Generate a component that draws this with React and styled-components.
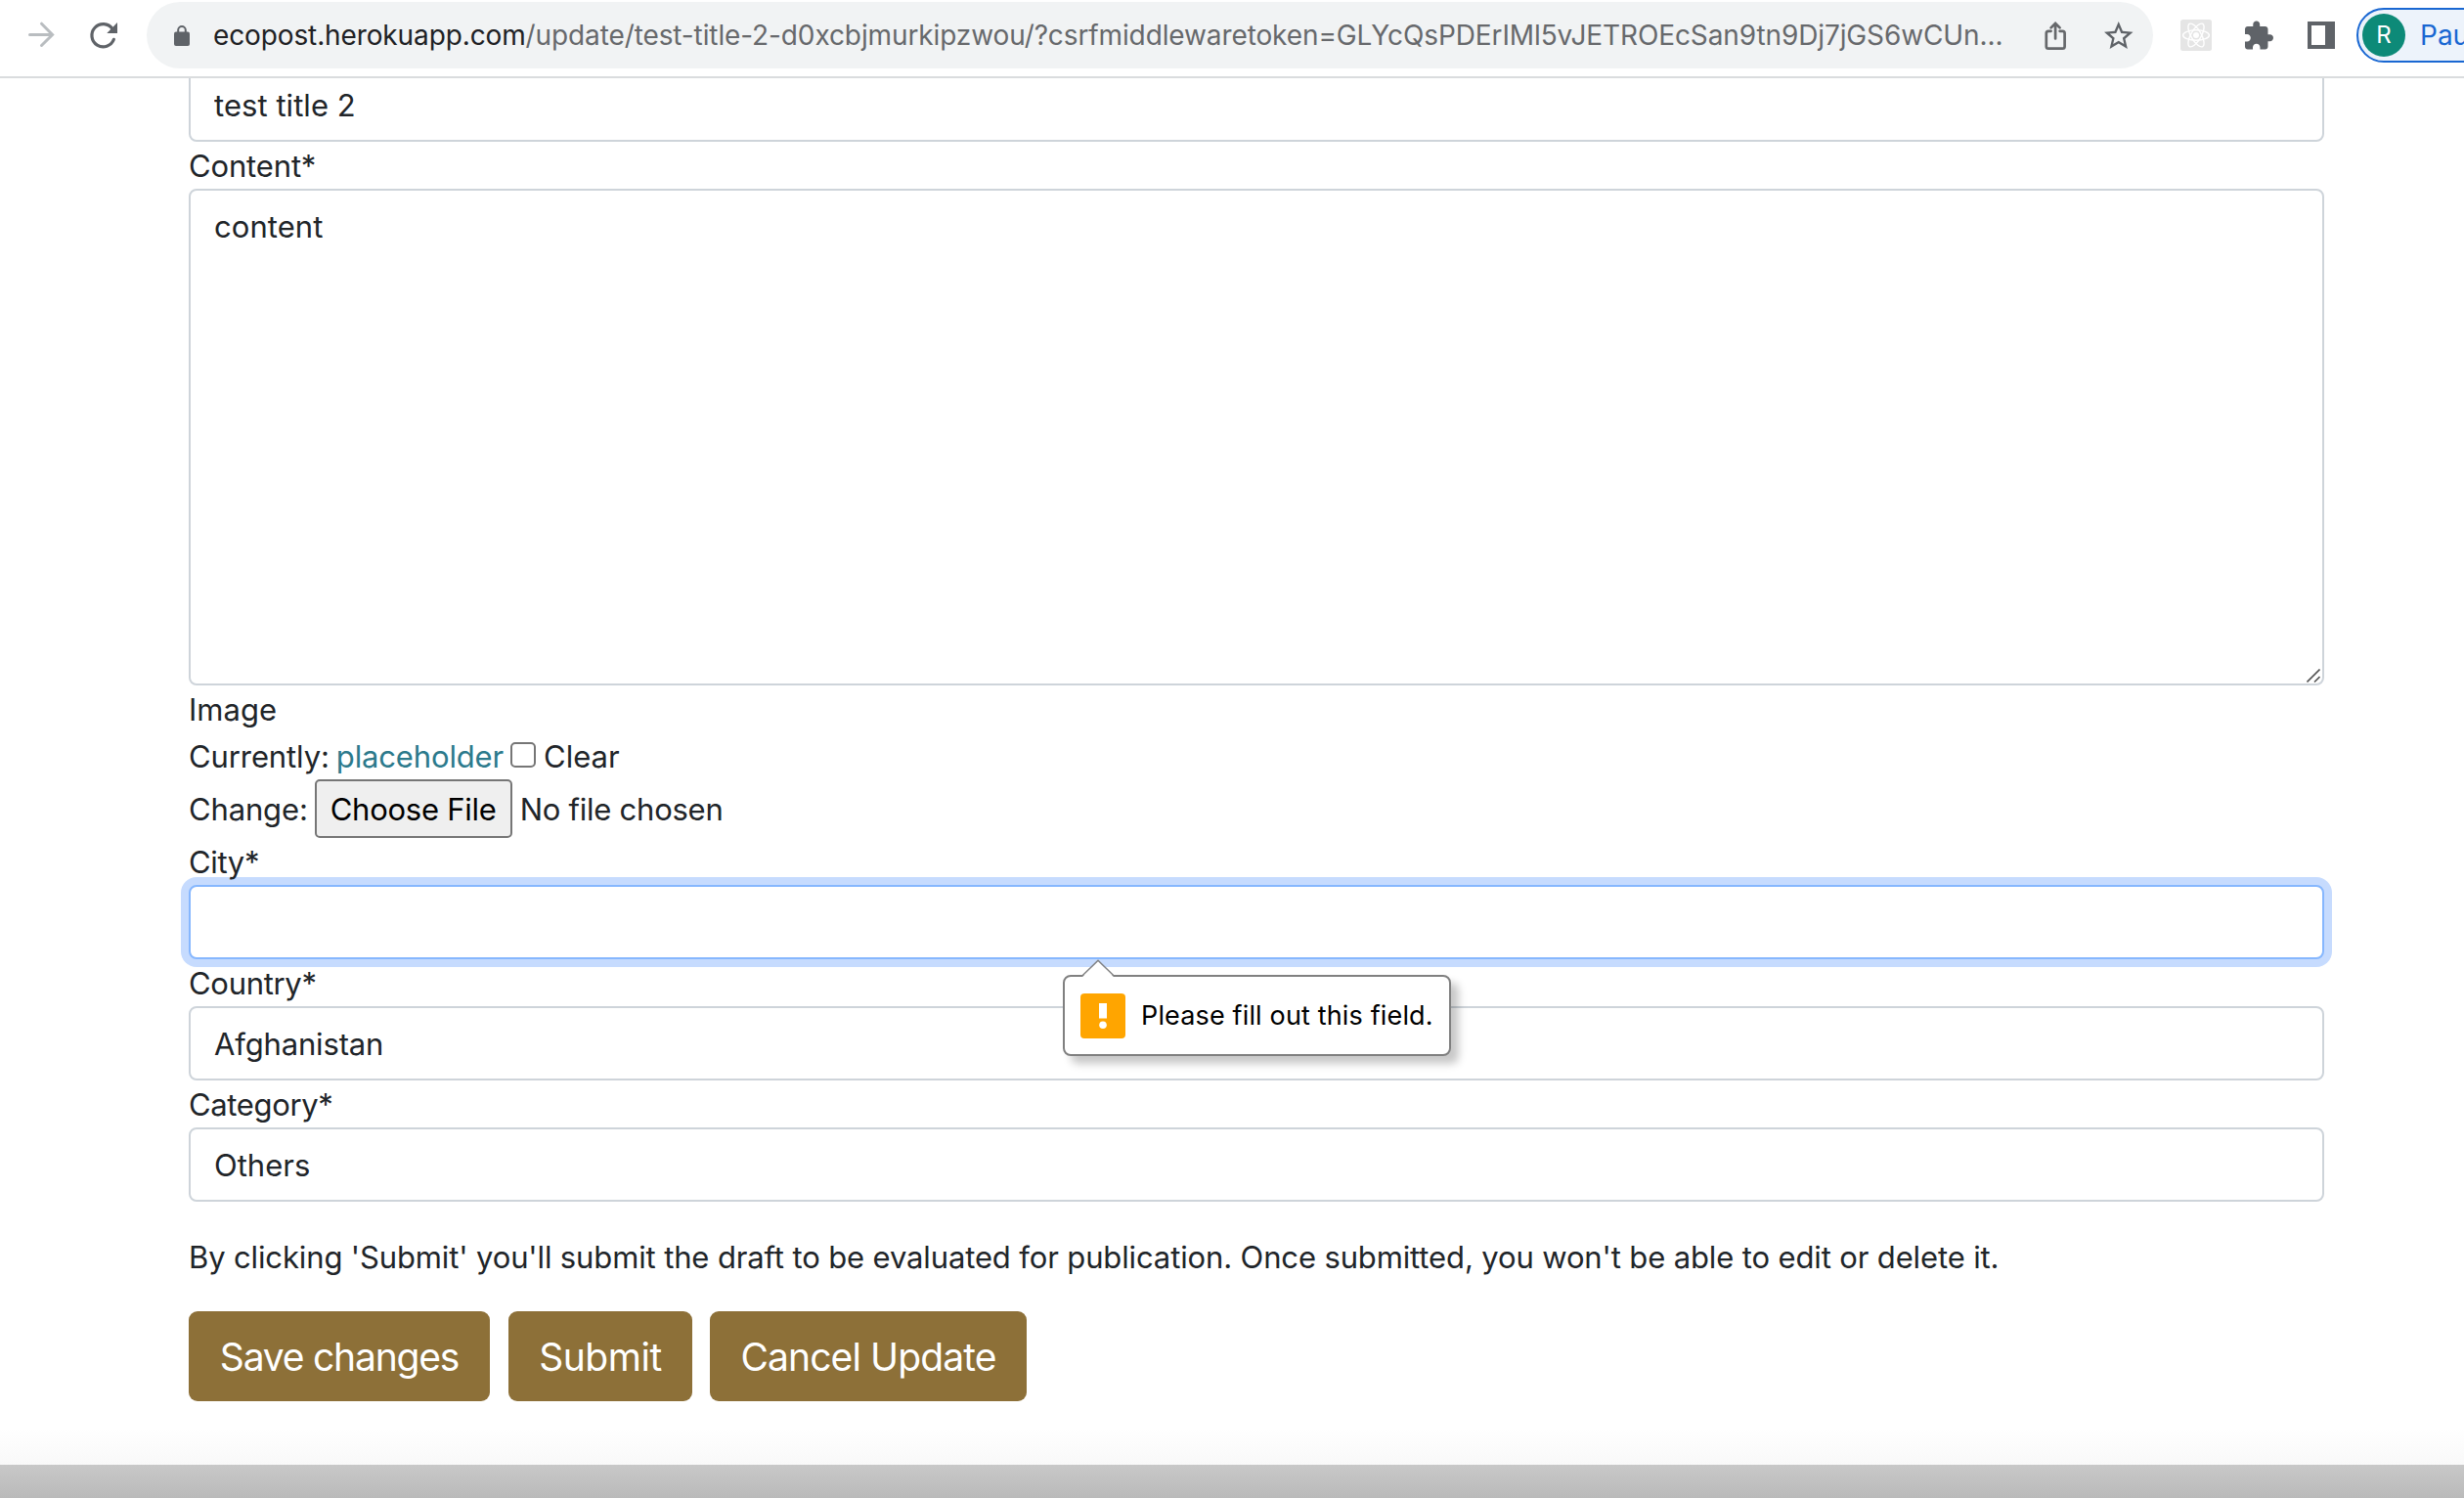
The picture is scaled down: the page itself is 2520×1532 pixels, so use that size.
import React from "react";
import styled, { createGlobalStyle, css } from "styled-components";

const GlobalStyle = createGlobalStyle`
  *, *::before, *::after { box-sizing: border-box; }
  body {
    margin: 0;
    background: #fff;
    color: #212529;
    font-family: Inter, "Liberation Sans", sans-serif;
    font-size: 31px;
    line-height: 48px;
  }
`;

const Window = styled.div`
  width: 2520px;
  height: 1532px;
  display: flex;
  flex-direction: column;
  overflow: hidden;
`;

/* Browser toolbar */

const Toolbar = styled.header`
  flex: none;
  height: 80px;
  padding: 2px 0 8px 28px;
  border-bottom: 2px solid #dadcde;
  display: flex;
  align-items: center;
  overflow: hidden;
`;

const Glyph = styled.svg`
  display: block;
  flex: none;
  width: ${(p) => p.$w}px;
  height: ${(p) => p.$h || p.$w}px;
  margin-left: ${(p) => p.$gap || 0}px;
  overflow: visible;
`;

const AddressBar = styled.div`
  flex: none;
  width: 2052px;
  height: 68px;
  margin-left: 30px;
  padding: 0 21px 0 28px;
  border-radius: 34px;
  background: #f1f3f4;
  display: flex;
  align-items: center;
`;

const Url = styled.div`
  flex: 1;
  margin-left: 24px;
  font-size: 28px;
  line-height: 40px;
  letter-spacing: -0.11px;
  white-space: nowrap;
  color: #67696c;
`;

const Domain = styled.span`
  color: #202124;
  letter-spacing: -0.12px;
`;

const Profile = styled.div`
  flex: none;
  width: 200px;
  height: 56px;
  margin-left: 22px;
  padding-left: 4px;
  border: 2px solid #1967d2;
  border-radius: 28px;
  background: #edf3fb;
  color: #1967d2;
  font-size: 28px;
  line-height: 40px;
  display: flex;
  align-items: center;
  gap: 15px;
`;

const Avatar = styled.span`
  flex: none;
  width: 44px;
  height: 44px;
  border-radius: 50%;
  background: #0d8a78;
  color: #fff;
  font-size: 24px;
  display: flex;
  align-items: center;
  justify-content: center;
`;

/* Page */

const Page = styled.main`
  flex: none;
  height: 1418px;
  padding: 0 143px 0 193px;
  overflow: hidden;
  background: linear-gradient(#fff 1380px, #f9f9f9 1418px);
`;

const Form = styled.form`
  margin-top: -11px;
  display: flex;
  flex-direction: column;
`;

const Label = styled.label`
  position: relative;
  z-index: 1;
  height: 48px;
  padding-top: 1px;
  letter-spacing: ${(p) => p.$tracking || 0}px;
`;

const controlStyle = css`
  display: block;
  width: 100%;
  margin: 0;
  border: 2px solid #ced4da;
  border-radius: 8px;
  outline: 0;
  background: #fff;
  color: #212529;
  font: inherit;
  appearance: none;
`;

const Control = styled.input`
  ${controlStyle}
  height: 76px;
  padding: 12px 24px;
  letter-spacing: ${(p) => p.$tracking || 0}px;
  ${(p) =>
    p.$focused &&
    css`
      border-color: #86b7fe;
      box-shadow: 0 0 0 8px #c6dbfe;
    `}
`;

const Area = styled.textarea`
  ${controlStyle}
  height: 508px;
  padding: 13px 24px;
  letter-spacing: 0.05px;
  resize: none;
`;

const FieldWrap = styled.div`
  position: relative;
`;

const ResizeGrip = styled.svg`
  position: absolute;
  right: 4px;
  bottom: 3px;
  width: 14px;
  height: 14px;
`;

const InlineRow = styled.div`
  height: ${(p) => p.$h}px;
  padding-top: 1px;
  display: flex;
  align-items: center;
  white-space: nowrap;
`;

const Caption = styled.span`
  letter-spacing: ${(p) => p.$tracking || 0}px;
`;

const Link = styled.a`
  margin-left: 7px;
  color: #2c7a8c;
  letter-spacing: -0.15px;
  text-decoration: none;
`;

const Checkbox = styled.input`
  appearance: none;
  width: 26px;
  height: 26px;
  margin: 0 8px 3px 7px;
  border: 2px solid #767676;
  border-radius: 5px;
  background: #fff;
`;

const FileButton = styled.button`
  width: 202px;
  height: 60px;
  margin: -1px 8px 0 7px;
  padding: 1px 0 0;
  border: 2px solid #767676;
  border-radius: 5px;
  background: #efefef;
  color: #000;
  font: inherit;
  letter-spacing: -0.25px;
`;

const Bubble = styled.div`
  position: absolute;
  z-index: 2;
  left: 894px;
  top: 92px;
  width: 397px;
  height: 83px;
  padding: 0 16px;
  border: 2px solid #808080;
  border-radius: 8px;
  background: #fff;
  box-shadow: 8px 8px 8px rgba(0, 0, 0, 0.22);
  color: #000;
  font-size: 27px;
  letter-spacing: 0.15px;
  white-space: nowrap;
  display: flex;
  align-items: center;
  gap: 16px;
`;

const BubbleArrow = styled.svg`
  position: absolute;
  left: 17px;
  top: -18px;
  width: 34px;
  height: 19px;
`;

const Notice = styled.p`
  margin: 32px 0;
  height: 48px;
  padding-top: 1px;
  letter-spacing: -0.13px;
  white-space: nowrap;
`;

const Actions = styled.div`
  display: flex;
`;

const Button = styled.button`
  width: ${(p) => p.$w}px;
  height: 92px;
  margin: 0 ${(p) => p.$after || 0}px 0 0;
  padding: 2px 0 0;
  border: 0;
  border-radius: 9px;
  background: #8d7038;
  color: #fff;
  font: inherit;
  font-size: 39px;
  letter-spacing: ${(p) => p.$tracking}px;
  white-space: nowrap;
`;

const Desktop = styled.footer`
  flex: 1;
  background: linear-gradient(#c8c8c8, #bababa);
`;

const BrowserBar = () => (
  <Toolbar>
    <Glyph $w={28} viewBox="28 22 28 28" fill="none" stroke="#b9bdc0" strokeWidth="3" strokeLinecap="round" strokeLinejoin="miter">
      <path d="M30.5 35.5H53M42.5 24.2L53.6 35.5L42.5 46.5" />
    </Glyph>
    <Glyph $w={28} $gap={36} viewBox="92 22 28 28">
      <path d="M115 29.5A11.6 11.6 0 1 0 116.4 40.3" fill="none" stroke="#5f6368" strokeWidth="3.2" strokeLinecap="round" />
      <path d="M109.3 34H120V23Z" fill="#5f6368" />
    </Glyph>
    <AddressBar>
      <Glyph $w={16} $h={21} viewBox="178 26 16 21">
        <rect x="178" y="32.6" width="16" height="14.4" rx="2" fill="#5f6368" />
        <path d="M182.2 33V30.8A3.8 3.8 0 0 1 189.8 30.8V33" fill="none" stroke="#5f6368" strokeWidth="2" />
      </Glyph>
      <Url>
        <Domain>ecopost.herokuapp.com</Domain>
        /update/test-title-2-d0xcbjmurkipzwou/?csrfmiddlewaretoken=GLYcQsPDErIMl5vJETROEcSan9tn9Dj7jGS6wCUn...
      </Url>
      <Glyph $w={22} $h={29} viewBox="2091 22 22 29" fill="none" stroke="#66686b" strokeWidth="2.7" strokeLinecap="round">
        <path d="M2097.6 31.8H2095A2.2 2.2 0 0 0 2092.8 34V47.4A2.2 2.2 0 0 0 2095 49.6H2109.4A2.2 2.2 0 0 0 2111.6 47.4V34A2.2 2.2 0 0 0 2109.4 31.8H2106.6" />
        <path d="M2102.1 39.4V24.5M2097.6 28.4L2102.1 24L2106.6 28.4" />
      </Glyph>
      <Glyph $w={29.5} $h={28} $gap={38.5} viewBox="2 2 20 19" preserveAspectRatio="none">
        <path
          fill="#5f6368"
          d="M22 9.24l-7.19-.62L12 2 9.19 8.63 2 9.24l5.46 4.73L5.82 21 12 17.27 18.18 21l-1.63-7.03L22 9.24zM12 15.4l-3.76 2.27 1-4.28-3.32-2.88 4.38-.38L12 6.1l1.71 4.04 4.38.38-3.32 2.88 1 4.28L12 15.4z"
        />
      </Glyph>
    </AddressBar>
    <Glyph $w={32} $gap={28} viewBox="0 0 32 32">
      <rect width="32" height="32" rx="2.5" fill="#e5e5e5" />
      <circle cx="16" cy="16" r="3" fill="#fff" />
      <g fill="none" stroke="#fff" strokeWidth="1.4">
        <ellipse cx="16" cy="16" rx="13.4" ry="5.2" />
        <ellipse cx="16" cy="16" rx="13.4" ry="5.2" transform="rotate(60 16 16)" />
        <ellipse cx="16" cy="16" rx="13.4" ry="5.2" transform="rotate(120 16 16)" />
      </g>
    </Glyph>
    <Glyph $w={29} $gap={34} viewBox="2 1.4 21 21">
      <path
        fill="#5f6368"
        d="M20.5 11H19V7c0-1.1-.9-2-2-2h-4V3.5C13 2.12 11.88 1 10.5 1S8 2.12 8 3.5V5H4c-1.1 0-1.99.9-1.99 2v3.8H3.5c1.49 0 2.7 1.21 2.7 2.7s-1.21 2.7-2.7 2.7H2V20c0 1.1.9 2 2 2h3.8v-1.5c0-1.49 1.21-2.7 2.7-2.7 1.49 0 2.7 1.21 2.7 2.7V22H17c1.1 0 2-.9 2-2v-4h1.5c1.38 0 2.5-1.12 2.5-2.5S21.88 11 20.5 11z"
      />
    </Glyph>
    <Glyph $w={28} $gap={35} viewBox="0 0 28 28">
      <rect width="28" height="28" fill="#5f6368" />
      <rect x="4" y="4" width="14" height="20" fill="#fff" />
    </Glyph>
    <Profile>
      <Avatar>R</Avatar>
      Paused
    </Profile>
  </Toolbar>
);

const ValidationBubble = () => (
  <Bubble role="alert">
    <BubbleArrow viewBox="0 0 34 19">
      <path d="M1 18L17 2L33 18V19H1Z" fill="#fff" />
      <path d="M0.5 17.3L17 1.2L33.5 17.3" fill="none" stroke="#808080" strokeWidth="1.4" />
    </BubbleArrow>
    <Glyph $w={46} viewBox="0 0 46 46">
      <rect width="46" height="46" rx="4" fill="#ffa500" />
      <rect x="19" y="10" width="8" height="15.5" fill="#fff" />
      <circle cx="23" cy="32.3" r="3.8" fill="#fff" />
    </Glyph>
    Please fill out this field.
  </Bubble>
);

export default function App() {
  return (
    <Window>
      <GlobalStyle />
      <BrowserBar />
      <Page>
        <Form onSubmit={(e) => e.preventDefault()}>
          <Control defaultValue="test title 2" $tracking={0.05} />
          <Label $tracking={-0.15}>Content*</Label>
          <FieldWrap>
            <Area defaultValue="content" />
            <ResizeGrip viewBox="0 0 14 14" stroke="#555" strokeWidth="1.6">
              <path d="M0.5 13.5L13.5 0.5M8 13.5L13.5 8" />
            </ResizeGrip>
          </FieldWrap>
          <Label>Image</Label>
          <InlineRow $h={48}>
            <Caption $tracking={-0.1}>Currently:</Caption>
            <Link>placeholder</Link>
            <Checkbox type="checkbox" />
            <Caption>Clear</Caption>
          </InlineRow>
          <InlineRow $h={60}>
            <Caption $tracking={-0.15}>Change:</Caption>
            <FileButton type="button">Choose File</FileButton>
            <Caption $tracking={-0.25}>No file chosen</Caption>
          </InlineRow>
          <Label $tracking={-0.35}>City*</Label>
          <FieldWrap>
            <Control $focused />
            <ValidationBubble />
          </FieldWrap>
          <Label $tracking={-0.3}>Country*</Label>
          <Control defaultValue="Afghanistan" $tracking={-0.15} />
          <Label $tracking={-0.35}>Category*</Label>
          <Control defaultValue="Others" />
          <Notice>
            By clicking 'Submit' you'll submit the draft to be evaluated for publication. Once submitted, you won't be
            able to edit or delete it.
          </Notice>
          <Actions>
            <Button type="button" $w={308} $after={19} $tracking={-1.2}>Save changes</Button>
            <Button type="button" $w={188} $after={18} $tracking={-0.45}>Submit</Button>
            <Button type="button" $w={324} $tracking={-0.88}>Cancel Update</Button>
          </Actions>
        </Form>
      </Page>
      <Desktop />
    </Window>
  );
}
